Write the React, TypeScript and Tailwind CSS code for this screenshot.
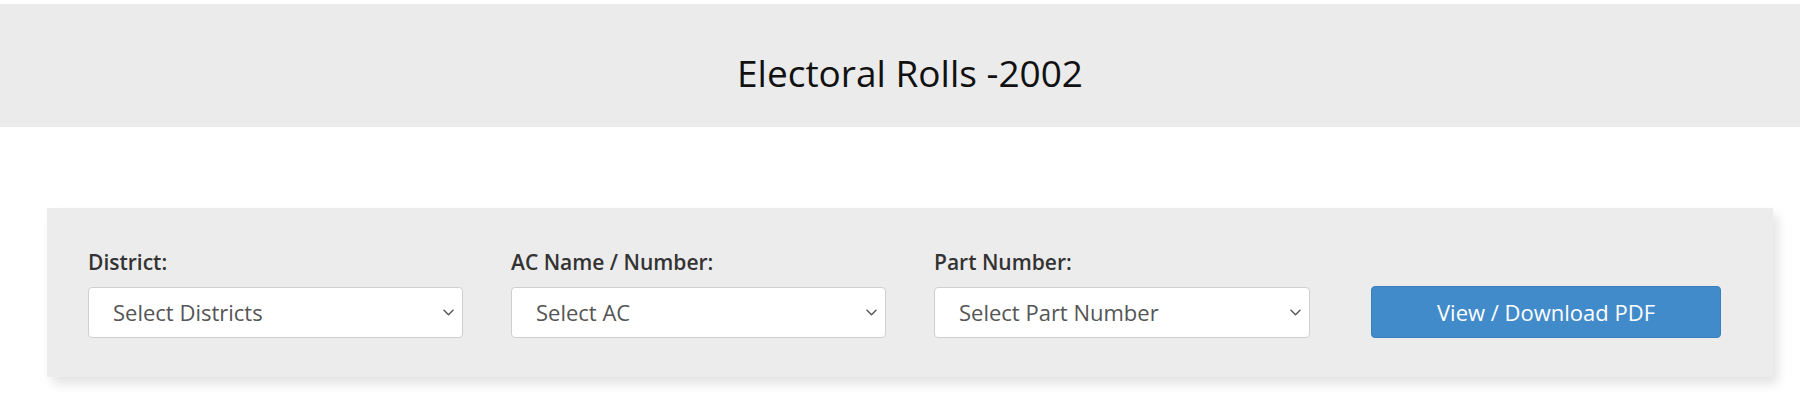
import React from "react";

const fields = [
  { label: "District:", placeholder: "Select Districts" },
  { label: "AC Name / Number:", placeholder: "Select AC" },
  { label: "Part Number:", placeholder: "Select Part Number" },
];

function Chevron() {
  return (
    <svg width="11" height="7" viewBox="0 0 11 7" fill="none" className="shrink-0">
      <path d="M1 1.2l4.5 4.5L10 1.2" stroke="#555" strokeWidth="1.4" strokeLinecap="round" strokeLinejoin="round" />
    </svg>
  );
}

export default function App() {
  return (
    <div className="min-h-[400px] w-[1800px] bg-white pt-1 font-['Open_Sans',sans-serif]">
      {/* header band */}
      <div className="h-[123px] bg-[#ebebeb] pt-[47px] pl-5 text-center">
        <h2 className="text-[37px] leading-[44px] font-normal text-[#111]">Electoral Rolls -2002</h2>
      </div>

      {/* search panel */}
      <div className="ml-[47px] mt-[81px] w-[1726px] bg-[#ececec] pt-[39px] pb-[39px] pl-[41px] shadow-[5px_7px_10px_rgba(0,0,0,0.11)]">
        <div className="flex items-end">
          {fields.map((f, i) => (
            <div key={f.label} className={i === 2 ? "mr-[61px] w-[376px]" : "mr-[48px] w-[375px]"}>
              <label className="mb-[10px] block text-[21px] leading-[30px] font-semibold text-[#333]">
                {f.label}
              </label>
              <div className="flex h-[51px] items-center justify-between rounded-[4px] border border-[#cfcfcf] bg-white pl-6 pr-[8px] text-[22px] text-[#555]">
                <span>{f.placeholder}</span>
                <Chevron />
              </div>
            </div>
          ))}
          <button className="h-[52px] w-[350px] rounded-[4px] border border-[#3a7fbd] bg-[#428bca] text-[22px] text-white">
            View / Download PDF
          </button>
        </div>
      </div>
    </div>
  );
}
